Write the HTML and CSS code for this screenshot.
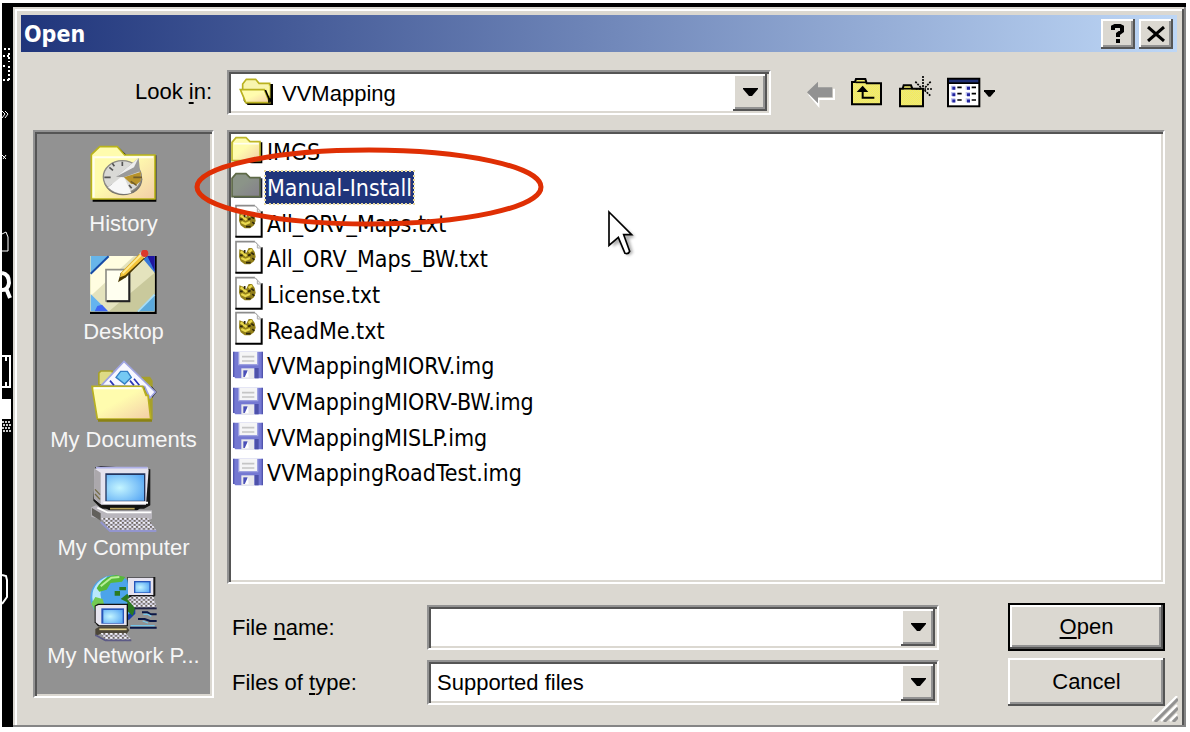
FILE: index.html
```html
<!DOCTYPE html>
<html lang="en">
<head>
<meta charset="utf-8">
<title>Open</title>
<link rel="stylesheet" href="styles.css">
</head>
<body>
<svg class="defs" width="0" height="0" aria-hidden="true">
  <defs>
    <linearGradient id="cream" x1="0" y1="0" x2="1" y2="1"><stop offset="0.45" stop-color="#fffcae"/><stop offset="1" stop-color="#f3cda8"/></linearGradient>
    <linearGradient id="grayFolder" x1="0" y1="0" x2="1" y2="1"><stop offset="0.4" stop-color="#8b9488"/><stop offset="1" stop-color="#847f8c"/></linearGradient>
    <radialGradient id="screen" cx="0.35" cy="0.5" r="0.75"><stop offset="0" stop-color="#c4f5ff"/><stop offset="1" stop-color="#5aa9f5"/></radialGradient>
    <pattern id="check" width="6" height="6" patternUnits="userSpaceOnUse"><rect width="6" height="6" fill="#f7f055"/><path d="M0 0h3v3H0zM3 3h3v3H3z" fill="#e9e384"/></pattern>
    <pattern id="keys" width="14" height="12" patternUnits="userSpaceOnUse"><rect width="14" height="12" fill="#d4d2e4"/><path d="M0 0h6v5H0zM7 6h6v5H7z" fill="#6d6660"/><path d="M7 0h5v4H7z" fill="#fff"/></pattern>
    <symbol id="folder" viewBox="33 30 102 102" overflow="visible">
      <path d="M40 52L52 40H80L92 52H127V115H96L42 109Z" fill="#000"/>
      <path d="M36 107V52L48 38H78L90 50H120V107Z" fill="url(#cream)" stroke="#bdb62a" stroke-width="5"/>
      <path d="M42 56H116" stroke="#fffef0" stroke-width="5"/>
    </symbol>
    <symbol id="folder-selected" viewBox="33 30 102 102" overflow="visible">
      <path d="M40 52L52 40H80L92 52H127V110H42Z" fill="#141c30"/>
      <path d="M36 107V52L48 38H78L90 50H120V107Z" fill="url(#grayFolder)" stroke="#5d6946" stroke-width="5"/>
    </symbol>
    <symbol id="textfile" viewBox="33 350 102 102" overflow="visible">
      <path d="M48 349H106L124 368V441H48Z" fill="#fff"/>
      <path d="M48 442V349H105" fill="none" stroke="#8c8c8c" stroke-width="5"/>
      <path d="M46 442H125V366" fill="none" stroke="#000" stroke-width="6"/>
      <path d="M105 349L124 368H112V357Z" fill="#eee" stroke="#aaa" stroke-width="3"/>
      <path d="M58 372L70 376L78 384L86 368L96 368L104 380L107 394L102 408L90 417H74L62 408L57 394Z" fill="#93801a"/>
      <path d="M62 378L72 386L80 392M86 380L96 372M64 398L76 404L90 398" fill="none" stroke="#ead94e" stroke-width="7"/>
      <path d="M74 374V384M94 382L102 388M60 390H68M84 390L92 388M78 412H92M97 398L103 404" stroke="#2d260c" stroke-width="5"/>
    </symbol>
    <symbol id="floppy" viewBox="33 145 102 102" overflow="visible">
      <path d="M41 153H127V233H46L41 227Z" fill="#7478d2"/>
      <path d="M41 153V229M127 153V233" stroke="#5155ae" stroke-width="4"/>
      <path d="M56 153H112V192H56Z" fill="#f5f5f6"/>
      <path d="M66 168H103M66 181H103" stroke="#c5c5c5" stroke-width="5"/>
      <path d="M56 154V192H113V154" fill="none" stroke="#9ea2e0" stroke-width="4"/>
      <path d="M64 203H103V234H64Z" fill="#e9e9ec"/>
      <path d="M70 209H83V229H70Z" fill="#4a50b8"/>
      <path d="M84 208L74 230H86Z" fill="#fff"/>
      <path d="M104 202H116V233H104Z" fill="#4d51aa"/>
    </symbol>
    <symbol id="arrow" viewBox="0 0 15 9"><path d="M0 0H15V1L9 8H6L0 1Z" fill="#000"/></symbol>
  </defs>
</svg>

<div class="backdrop">
  <svg class="edge" width="11" height="724" viewBox="2 3 11 724" aria-hidden="true">
    <path d="M4 49H12M3 56H10M9 53V62M3 66H5M9 66V80M3 80H11" fill="none" stroke="#fff" stroke-width="2" stroke-dasharray="2 2"/>
    <path d="M2 111L5 114L2 118M5 111L8 114L5 118M2 155L6 159M6 155L3 159" fill="none" stroke="#fff" stroke-width="1"/>
    <path d="M2 234L6 232L8 237V251H2" fill="none" stroke="#fff" stroke-width="1"/>
    <path d="M2 273Q9 274 9 283Q8 290 2 290M6 288L10 298" fill="none" stroke="#fff" stroke-width="4"/>
    <path d="M2 356H10V387H2M6 357V361M6 382V386" fill="none" stroke="#fff" stroke-width="2"/>
    <path d="M2 399H11V419H2Z" fill="#fff"/>
    <path d="M2 422H11M3 425H11M2 428H11M3 431H11" stroke="#ccc" stroke-width="2" stroke-dasharray="2 1"/>
    <path d="M2 575L6 576L7 580V597L2 604" fill="none" stroke="#fff" stroke-width="2"/>
  </svg>

  <main class="dialog">
    <header class="titlebar">
      <h1 class="title">Open</h1>
      <button class="caption-button" type="button" aria-label="Help"><svg width="14" height="19" viewBox="0 0 14 19"><path d="M2 6V3L4 2H9L11 3V7L7 10V13" fill="none" stroke="#000" stroke-width="4"/><path d="M5 15H9V19H5Z"/></svg></button>
      <button class="caption-button" type="button" aria-label="Close"><svg width="18" height="16" viewBox="0 0 18 16"><path d="M1 1L17 15M17 1L1 15" stroke="#000" stroke-width="3"/></svg></button>
    </header>

    <div class="content">
      <label class="look-label" for="lookin"><span>Look <u>i</u>n:</span></label>
      <div class="look-row">
        <div class="combo look-combo">
          <select class="field field-with-icon" id="lookin"><option>VVMapping</option></select>
          <svg class="combo-icon" width="36" height="30" viewBox="716 232 108 90" aria-hidden="true">
            <path d="M730 262L742 248L770 250H818V313H742L730 300Z" fill="#000"/>
            <path d="M727 266V250L738 236H766L776 248H808V290H740Z" fill="#f8f5ae" stroke="#b9b11f" stroke-width="5"/>
            <path d="M720 267H792L808 306H736L730 290Z" fill="url(#cream)" stroke="#b9b11f" stroke-width="5"/>
            <path d="M794 270L808 286V254L796 262Z" fill="#fbf7a0"/><path d="M795 268L806 294V306" fill="none" stroke="#000" stroke-width="5"/>
          </svg>
          <span class="drop"><svg width="15" height="9"><use href="#arrow"/></svg></span>
        </div>
        <div class="tools">
          <button class="tool" type="button" aria-label="Back"><svg width="28" height="32" viewBox="258 228 84 96"><path d="M264 282L292 316V297H339V266" fill="none" stroke="#fff" stroke-width="6"/><path d="M258 277L291 245V262H334V292H291V310Z" fill="#929292"/></svg></button>
          <button class="tool" type="button" aria-label="Up one level"><svg width="32" height="32" viewBox="390 228 96 96"><path d="M393 313V246H402L405 237H433L437 250H480V313Z" fill="url(#check)" stroke="#000" stroke-width="6"/><path d="M404 247H436" stroke="#000" stroke-width="5"/><path d="M425 271V293H460" fill="none" stroke="#000" stroke-width="6"/><path d="M407 276L425 257L442 276Z"/></svg></button>
          <button class="tool" type="button" aria-label="New folder"><svg width="32" height="32" viewBox="534 228 96 96"><path d="M537 319V266H545L548 256H570L574 266H606V319Z" fill="url(#check)" stroke="#000" stroke-width="6"/><path d="M546 266H573" stroke="#000" stroke-width="5"/><path d="M606 228V262M583 245L601 264M629 245L612 263M633 267H610M628 287L610 270M584 267H600" stroke="#000" stroke-width="5" stroke-dasharray="6 3"/></svg></button>
          <button class="tool" type="button" aria-label="View menu"><svg width="49" height="32" viewBox="678 228 147 96"><path d="M678 233H778V322H678Z"/><path d="M684 239H772V247H684Z" fill="#1f2f74"/><path d="M684 252H772V316H684Z" fill="#fff"/><path d="M690 263H703M734 263H747M690 282H703M734 282H747M690 301H703M734 301H747" stroke="#c0c4ee" stroke-width="12"/><path d="M694 265H703M738 265H747M694 284H703M738 284H747M694 303H703M738 303H747" stroke="#2326a0" stroke-width="9"/><path d="M709 262H722M752 262H765M709 281H722M752 281H765M709 300H722M752 300H765" stroke="#000" stroke-width="5"/><path d="M789 270H822V274L808 290H803L789 274Z"/></svg></button>
        </div>
      </div>

      <nav class="places" aria-label="Places">
        <button class="place" type="button">
          <svg class="place-icon" viewBox="268 48 204 204" aria-hidden="true">
            <path d="M274 92L300 64H354L378 88H467V227H276Z" fill="#000"/>
            <path d="M272 219V86L297 62H350L372 87H463V219Z" fill="url(#cream)" stroke="#b9b41c" stroke-width="5"/>
            <path d="M279 214V94H457" fill="none" stroke="#fffef0" stroke-width="6"/>
            <ellipse cx="367" cy="160" rx="58" ry="48" fill="#77736e"/><ellipse cx="365" cy="153" rx="57" ry="49" fill="#d9d9d6" stroke="#8d8b84" stroke-width="4"/>
            <path d="M365 107V120M365 188V200M311 154H330M326 124L337 133M325 184L337 175M393 187L385 177M335 112L341 121" stroke="#555" stroke-width="5"/>
            <path d="M322 184L368 148L392 201Q350 212 322 184Z" fill="#f7f7f7"/>
            <path d="M346 152L414 96L418 136L370 154Z" fill="#9a9a9a"/><path d="M346 152L413 97L400 124Z" fill="#eee"/>
            <path d="M370 154L420 138V165L410 174H392Z" fill="#b8932a"/><path d="M398 154H424M390 166L408 178" stroke="#705c2a" stroke-width="5"/>
          </svg>
          <span>History</span>
        </button>
        <button class="place" type="button">
          <svg class="place-icon" viewBox="268 372 204 204" aria-hidden="true">
            <path d="M268 390H468V564H268Z" fill="#000"/><path d="M268 390H462V557H268Z" fill="#e4e3bd"/>
            <path d="M270 444L325 390H400L270 510Z" fill="#fffde0"/><path d="M325 556H412L462 502V440Z" fill="#c9c99c"/>
            <path d="M270 390H324L270 444Z" fill="#67b5e9"/><path d="M324 391L270 443" stroke="#174ba5" stroke-width="6"/>
            <path d="M420 390H462V440Z" fill="#3577d8"/><path d="M440 390H462V436Z" fill="#2015a0"/>
            <path d="M270 504L322 556H270Z" fill="#65b4ef"/><path d="M290 540L304 536L322 556H282Z" fill="#3f66f2"/>
            <path d="M462 504V556H410Z" fill="#5ba9dc"/><path d="M412 556L462 506" stroke="#a8dcf5" stroke-width="5"/>
            <path d="M316 431H386V525H316Z" fill="#fffff0" stroke="#8f8f87" stroke-width="5"/><path d="M386 440V526H318" fill="none" stroke="#222" stroke-width="6"/>
            <path d="M352 469L360 442L424 376L440 390L376 454Z" fill="#493800"/><path d="M358 454L361 440L418 382L432 394L374 448Z" fill="#f5c53a"/><path d="M366 442L422 386" stroke="#ffec93" stroke-width="6"/>
            <path d="M415 383L424 374L439 388L432 397Z" fill="#ccc"/><circle cx="432" cy="382" r="11" fill="#db392b"/>
          </svg>
          <span>Desktop</span>
        </button>
        <button class="place" type="button">
          <svg class="place-icon" viewBox="268 36 204 204" aria-hidden="true">
            <path d="M292 116V80L300 73H336L344 92H448L456 104V222H440Z" fill="#a6a02b"/><path d="M297 114V82L302 77H332L338 92V114Z" fill="#dedb85"/>
            <path d="M452 120L468 138L454 156Z" fill="#111"/>
            <path d="M302 118L370 46L464 138L448 156L432 122Z" fill="#f8f8ff" stroke="#9fa4e2" stroke-width="5"/>
            <path d="M346 94L360 76H380L392 94L372 114Z" fill="#75c9f3" stroke="#347fc5" stroke-width="4"/>
            <path d="M328 104L340 118M388 104L400 118M400 98L416 118" stroke="#2b37b7" stroke-width="5"/>
            <path d="M290 222L276 122H430L452 222Z" fill="#29260a"/>
            <path d="M290 219L274 121H426L436 148H442L450 219Z" fill="url(#cream)" stroke="#b8b020" stroke-width="5"/><path d="M280 127H422" stroke="#fffff5" stroke-width="6"/><path d="M292 224H454" stroke="#8a8213" stroke-width="6"/>
          </svg>
          <span>My Documents</span>
        </button>
        <button class="place" type="button">
          <svg class="place-icon" viewBox="268 360 204 204" aria-hidden="true">
            <path d="M284 364L300 360L449 370V478L430 488H302L278 464Z" fill="#151515"/>
            <path d="M282 368L300 363H440L444 372L436 476H302L280 458Z" fill="#e5e3ee"/><path d="M282 368L300 380V474L280 458Z" fill="#aba8ac"/>
            <path d="M286 365H440" stroke="#aeb0e6" stroke-width="5"/><path d="M283 430L298 446M283 444L298 460" stroke="#726a44" stroke-width="4"/>
            <path d="M314 382H434V466H314Z" fill="#21345f"/><path d="M318 387H430V464H318Z" fill="url(#screen)"/>
            <path d="M308 470H442" stroke="#fff" stroke-width="6"/>
            <path d="M306 481H424L404 499H336Z" fill="#11110f"/><path d="M328 488H402" stroke="#b9a55b" stroke-width="5"/>
            <path d="M272 484L286 478L314 493H454V518L440 524H310L272 512Z" fill="#b9b6bd"/><path d="M274 486L300 502V524L274 508Z" fill="#62605c"/><path d="M290 485L320 499H452" fill="none" stroke="#fff" stroke-width="5"/>
            <path d="M302 516H442L466 552H326Z" fill="url(#keys)"/><path d="M300 528L328 555H467" fill="none" stroke="#9395ce" stroke-width="6"/>
          </svg>
          <span>My Computer</span>
        </button>
        <button class="place" type="button">
          <svg class="place-icon" viewBox="268 39 204 204" aria-hidden="true">
            <path d="M404 140V158L384 178L370 160Z" fill="#173da9"/><ellipse cx="338" cy="110" rx="69" ry="67" fill="#4ca4ea"/><path d="M276 120Q268 70 320 46Q292 80 302 116Z" fill="#b9e8fb"/>
            <path d="M294 72Q318 42 346 42L374 48L364 62L330 66L318 86L296 92L288 82Z" fill="#57b83a"/><path d="M300 76L332 50L356 48" fill="none" stroke="#b8ef98" stroke-width="6"/>
            <path d="M272 128L284 108L306 114L310 128L282 148Z" fill="#72ca52"/><path d="M342 90H358V104H342ZM356 78H376V88H356ZM360 114L380 98L404 140L396 164L380 150V124Z" fill="#2b7a20"/>
            <path d="M380 48H464V104L454 112H386Z" fill="#151515"/><path d="M382 50H458V102H382Z" fill="#e6e3ef"/><path d="M400 60H450V96H400Z" fill="#2755b8"/><path d="M404 64H446V94H404Z" fill="url(#screen)"/>
            <path d="M380 114L394 106H458L468 140H402Z" fill="url(#keys)"/><path d="M402 142H468" stroke="#202345" stroke-width="6"/>
            <path d="M282 134L292 128H382V196H292L282 184Z" fill="#111"/><path d="M285 136L294 132H378V193H296L285 184Z" fill="#e7e5ef"/><path d="M302 142H370V188H302Z" fill="#2755b8"/><path d="M308 147H366V186H308Z" fill="url(#screen)"/>
            <path d="M284 204L298 196H378L386 208L378 218H300L284 226Z" fill="#4c4638"/><path d="M296 205H378" stroke="#e3d28f" stroke-width="5"/><path d="M300 216H374L392 236H312Z" fill="url(#keys)"/><path d="M284 222L314 238H392" fill="none" stroke="#5c5a86" stroke-width="5"/>
            <path d="M424 154H440L450 160H468M412 174H432L448 180H468M388 200H468" fill="none" stroke="#0b1746" stroke-width="6"/><path d="M428 160H442L452 166M390 194H462M426 180L442 186" fill="none" stroke="#75c7ea" stroke-width="4"/>
          </svg>
          <span>My Network P...</span>
        </button>
      </nav>

      <section class="files">
        <ul class="file-list" role="listbox" aria-label="Files">
          <li class="file" role="option"><svg class="file-icon"><use href="#folder"/></svg><span class="name">IMGS</span></li>
          <li class="file" role="option" aria-selected="true"><svg class="file-icon"><use href="#folder-selected"/></svg><span class="name name-selected">Manual-Install</span></li>
          <li class="file" role="option"><svg class="file-icon"><use href="#textfile"/></svg><span class="name">All_ORV_Maps.txt</span></li>
          <li class="file" role="option"><svg class="file-icon"><use href="#textfile"/></svg><span class="name">All_ORV_Maps_BW.txt</span></li>
          <li class="file" role="option"><svg class="file-icon"><use href="#textfile"/></svg><span class="name">License.txt</span></li>
          <li class="file" role="option"><svg class="file-icon"><use href="#textfile"/></svg><span class="name">ReadMe.txt</span></li>
          <li class="file" role="option"><svg class="file-icon"><use href="#floppy"/></svg><span class="name">VVMappingMIORV.img</span></li>
          <li class="file" role="option"><svg class="file-icon"><use href="#floppy"/></svg><span class="name">VVMappingMIORV-BW.img</span></li>
          <li class="file" role="option"><svg class="file-icon"><use href="#floppy"/></svg><span class="name">VVMappingMISLP.img</span></li>
          <li class="file" role="option"><svg class="file-icon"><use href="#floppy"/></svg><span class="name">VVMappingRoadTest.img</span></li>
        </ul>
        <svg class="highlight" width="350" height="80" viewBox="0 0 350 80" aria-hidden="true"><ellipse cx="175" cy="40" rx="172" ry="37" fill="none" stroke="#df2f04" stroke-width="5"/></svg>
        <svg class="pointer" width="40" height="54" viewBox="142 57 120 162" aria-hidden="true">
          <path d="M156 76L226 140L208 146L220 188L206 198L190 180L180 158L160 170Z" fill="#000" opacity="0.3" class="shadow"/>
          <path d="M148 66L216 134H192L210 184Q206 194 196 190L176 142L148 166Z" fill="#fff" stroke="#000" stroke-width="5"/>
        </svg>
      </section>

      <form class="fields">
        <label class="field-label" for="filename"><span>File <u>n</u>ame:</span></label>
        <div class="combo">
          <input class="field" id="filename" type="text">
          <button class="drop drop-button" type="button" aria-label="Recent names"><svg width="15" height="9"><use href="#arrow"/></svg></button>
        </div>
        <button class="push default" type="button"><span><u>O</u>pen</span></button>
        <label class="field-label" for="filetype"><span>Files of <u>t</u>ype:</span></label>
        <div class="combo">
          <select class="field" id="filetype"><option>Supported files</option></select>
          <span class="drop"><svg width="15" height="9"><use href="#arrow"/></svg></span>
        </div>
        <button class="push" type="button">Cancel</button>
      </form>
    </div>
    <svg class="grip" width="26" height="26" viewBox="0 0 26 26" aria-hidden="true"><path d="M0 25L25 0M9 25L25 9M18 25L25 18" stroke="#fff" stroke-width="2"/><path d="M3 26L26 3M12 26L26 12M21 26L26 21" stroke="#929292" stroke-width="3"/></svg>
  </main>
</div>
</body>
</html>
```
FILE: styles.css
```css
* { box-sizing: border-box; }

body {
  margin: 0;
  min-height: 100vh;
  padding: 3px 4px 5px 2px;
  display: flex;
  background: #fff;
  color: #000;
  font: 22px/28px "Liberation Sans", Arial, sans-serif;
}

button, input, select { font: inherit; color: inherit; }
button { padding: 0; border: 0; background: none; }
svg { display: block; }
u { text-decoration-thickness: 2px; text-underline-offset: 3px; }
.defs { position: absolute; }

.backdrop {
  flex: 1;
  display: grid;
  grid-template-columns: 11px 1fr;
  padding-top: 4px;
  background: #000;
}
.edge { margin-top: -4px; }

.dialog {
  position: relative;
  display: flex;
  flex-direction: column;
  padding: 8px 9px 0 8px;
  background: #dbd8d1;
  box-shadow: inset -2px -2px #858585, inset 2px 2px #dbd8d1, inset -4px 0 #555, inset 4px 4px #fff;
}

.titlebar {
  display: flex;
  align-items: center;
  gap: 4px;
  height: 37px;
  padding: 0 4px 0 3px;
  background: linear-gradient(90deg, #20357b, #bed7f6);
}
.title {
  flex: 1;
  margin: 0;
  color: #fff;
  font: bold 23px/30px "DejaVu Sans Condensed", "Noto Sans", sans-serif;
}
.caption-button, .drop {
  display: grid;
  place-items: center;
  background: #dbd8d1;
  box-shadow: inset -2px -2px #555, inset 2px 2px #fff, inset -4px -4px #929292;
}
.caption-button { width: 34px; height: 30px; }

.content {
  flex: 1;
  display: grid;
  grid-template: 44px 1fr auto / 181px 1fr;
  column-gap: 13px;
  padding: 18px 12px 21px 12px;
}
.look-label { justify-self: end; align-self: center; padding-right: 2px; }
.look-row { display: flex; gap: 36px; }
.look-combo { flex: 0 0 58%; }
.tools { display: flex; align-items: center; gap: 16px; }
.tool svg { overflow: visible; }

.combo, .files, .places {
  border: 2px solid;
  border-color: #929292 #fff #fff #929292;
  box-shadow: inset 2px 2px #555, inset -2px -2px #dbd8d1;
  padding: 2px;
}
.combo { display: grid; grid-template-columns: 1fr 34px; height: 45px; background: #fff; }
.field {
  grid-area: 1 / 1 / 2 / 3;
  min-width: 0;
  width: 100%;
  padding: 2px 40px 0 6px;
  border: 0;
  outline: 0;
  background: none;
  appearance: none;
}
.field-with-icon { padding-left: 51px; }
.combo-icon { grid-area: 1 / 1; align-self: center; margin-left: 8px; pointer-events: none; }
.drop { grid-area: 1 / 2; pointer-events: none; }
.drop-button { pointer-events: auto; }

.places {
  grid-area: 2 / 1 / 4 / 2;
  display: flex;
  flex-direction: column;
  gap: 12px;
  margin: 16px 0 8px;
  padding: 10px 2px 2px;
  background: #929292;
}
.place { color: #f6f6f6; white-space: nowrap; }
.place-icon { width: 68px; height: 68px; margin: 0 auto; }

.files { position: relative; margin-top: 16px; background: #fff; }
.file-list {
  display: grid;
  grid-auto-rows: 1fr;
  height: 80%;
  margin: 0;
  padding: 0;
  list-style: none;
  font: 23px/32px "DejaVu Sans Condensed", "Noto Sans", sans-serif;
}
.file { display: flex; align-items: center; }
.file-icon { width: 34px; height: 34px; overflow: visible; }
.name { padding: 1px 2px 0; }
.name-selected { background: #20357b; color: #fff; outline: 2px dotted #e8d9a0; outline-offset: -1px; }

.highlight { position: absolute; left: -35px; top: 15px; pointer-events: none; }
.pointer { position: absolute; left: 378px; top: 77px; pointer-events: none; }
.shadow { filter: blur(5px); }

.fields {
  display: grid;
  grid-template-columns: 187px 1fr 157px;
  column-gap: 13px;
  row-gap: 7px;
  padding-top: 19px;
  align-items: center;
}
.fields .combo { margin-right: 56px; }
.field-label { padding: 2px 0 0 5px; }
.push {
  height: 48px;
  background: #dbd8d1;
  box-shadow: inset -2px -2px #555, inset 2px 2px #fff, inset -4px -4px #929292;
}
.default {
  border: 2px solid #000;
}
.grip { position: absolute; right: 8px; bottom: 5px; }
```
